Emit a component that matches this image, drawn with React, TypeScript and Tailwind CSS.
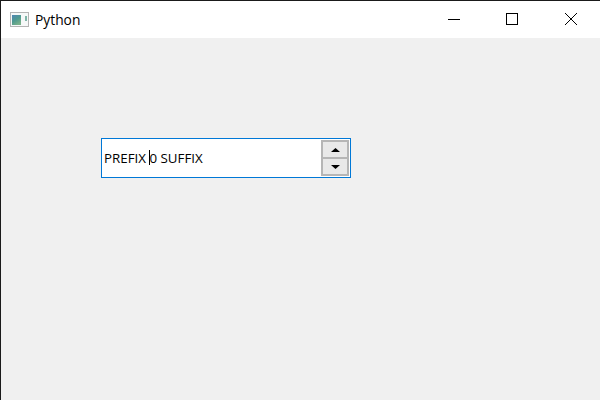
export default function App() {
  return (
    <div className="w-[600px] h-[400px] flex flex-col bg-[#f0f0f0] border-t border-l border-[#1a1a1a] overflow-hidden font-['Open_Sans','Noto_Sans',sans-serif]">
      <div className="h-[37px] shrink-0 bg-white flex items-center text-black">
        <svg width="20" height="16" viewBox="0 0 20 16" className="ml-[9px]">
          <defs>
            <linearGradient id="pane" x1="0" y1="0" x2="0.6" y2="1">
              <stop offset="0" stopColor="#4f86b5" />
              <stop offset="0.55" stopColor="#4f9a8f" />
              <stop offset="1" stopColor="#79b08a" />
            </linearGradient>
          </defs>
          <rect x="0.5" y="0.5" width="18" height="14" fill="#f6f8f8" stroke="#b4b4b4" />
          <rect x="2" y="3" width="9" height="10" fill="url(#pane)" />
          <rect x="15" y="4" width="2" height="5" fill="#7fb5a8" />
        </svg>
        <span className="ml-[5px] text-[13.8px] leading-none">Python</span>
        <div className="ml-auto flex h-full items-center mr-[6px]">
          <svg width="46" height="37" viewBox="0 0 46 37" className="mr-[12px]">
            <path d="M17 18.5H29" stroke="#000" strokeWidth="1" />
          </svg>
          <svg width="46" height="37" viewBox="0 0 46 37">
            <rect x="17.5" y="12.5" width="11" height="11" fill="none" stroke="#000" strokeWidth="1" />
          </svg>
          <svg width="46" height="37" viewBox="0 0 46 37" className="ml-[13px]">
            <path d="M17 12L29 24M29 12L17 24" stroke="#000" strokeWidth="1" />
          </svg>
        </div>
      </div>
      <div className="flex-1 pl-[100px] pt-[100px]">
        <div className="w-[250px] h-[40px] bg-white border border-[#0078d7] flex items-center pl-[2px] pr-px">
          <span className="flex-1 flex items-center text-[13.33px] text-black whitespace-pre leading-none">
            <span className="pt-[2px]">PREFIX </span>
            <span className="w-px h-[15px] bg-black -mr-px"></span>
            <span className="pt-[2px]">0 SUFFIX</span>
          </span>
          <div className="w-[28px] h-[36px] flex flex-col">
            <div className="h-[18px] bg-[#e9e9e9] border-2 border-[#b6b6b6] border-b flex items-center justify-center">
              <svg width="9" height="4" viewBox="0 0 9 4"><path d="M4.5 0L9 4H0Z" fill="#000" /></svg>
            </div>
            <div className="h-[18px] bg-[#e9e9e9] border-2 border-[#b6b6b6] border-t flex items-center justify-center">
              <svg width="9" height="4" viewBox="0 0 9 4"><path d="M0 0H9L4.5 4Z" fill="#000" /></svg>
            </div>
          </div>
        </div>
      </div>
    </div>
  );
}
